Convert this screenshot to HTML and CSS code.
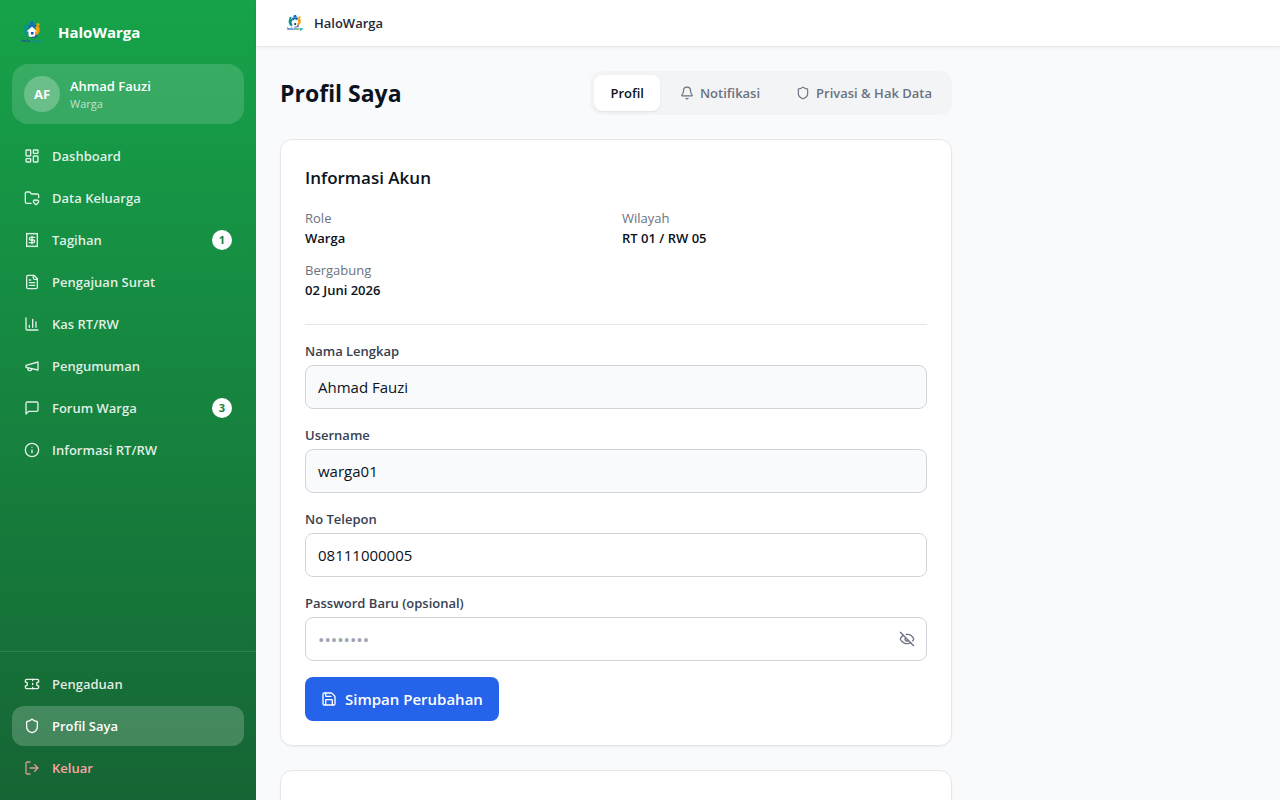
FILE: index.html
```html
<!DOCTYPE html>
<html lang="id">
<head>
<meta charset="utf-8">
<meta name="viewport" content="width=device-width, initial-scale=1">
<title>Profil Saya - HaloWarga</title>
<link rel="stylesheet" href="styles.css">
</head>
<body>
<svg class="defs" aria-hidden="true">
  <symbol id="logo" viewBox="0 0 48 48">
    <path d="M11 10a15 15 0 0 0 3 23l5-5a9 9 0 0 1-1-12z" fill="#0d9488"/>
    <path d="M15 12q7-5 7-2h4q5-3 7 2l-6 5H19z" fill="#1769b5"/>
    <path d="M35 10q6 5 4 13-3 8-12 10l-1-6q8-2 5-12z" fill="#f59e0b"/>
    <circle cx="24" cy="6" r="4" fill="#1769d2"/>
    <circle cx="36" cy="9" r="3" fill="#f59e0b"/>
    <circle cx="12" cy="10" r="3" fill="#0d9488"/>
    <path d="M24 13l-11 10h4v8l3 3h10v-11h4z" fill="#fff"/>
    <path d="M22 24h5v5h-5zM22 34q8 0 11-5l2 3q-5 5-13 4z" fill="#1e4e9c"/>
    <text x="24" y="43" text-anchor="middle" class="logo-text"><tspan fill="#1e4e9c">halo</tspan><tspan fill="#0d9488">warga</tspan></text>
  </symbol>
  <symbol id="shield" viewBox="0 0 24 24"><path d="M20 13c0 5-3.5 7.5-7.66 8.95a1 1 0 0 1-.67-.01C7.5 20.5 4 18 4 13V6a1 1 0 0 1 1-1c2 0 4.5-1.2 6.24-2.72a1.17 1.17 0 0 1 1.52 0C14.51 3.81 17 5 19 5a1 1 0 0 1 1 1z"/></symbol>
</svg>
<div class="app">
  <aside class="sidebar">
    <div class="brand"><svg class="brand-logo"><use href="#logo"/></svg><span>HaloWarga</span></div>
    <div class="user">
      <span class="avatar">AF</span>
      <div class="user-info"><span class="user-name">Ahmad Fauzi</span><span class="user-role">Warga</span></div>
    </div>
    <nav class="nav nav-main">
      <a href="#" class="nav-item"><svg class="icon" viewBox="0 0 24 24"><rect width="7" height="9" x="3" y="3" rx="1"/><rect width="7" height="5" x="14" y="3" rx="1"/><rect width="7" height="9" x="14" y="12" rx="1"/><rect width="7" height="5" x="3" y="16" rx="1"/></svg><span>Dashboard</span></a>
      <a href="#" class="nav-item"><svg class="icon" viewBox="0 0 24 24"><path d="M10.638 20H4a2 2 0 0 1-2-2V5a2 2 0 0 1 2-2h3.9a2 2 0 0 1 1.69.9l.81 1.2a2 2 0 0 0 1.67.9H20a2 2 0 0 1 2 2v3.417"/><path d="M14.62 18.8A2.25 2.25 0 1 1 18 15.836a2.25 2.25 0 1 1 3.38 2.966l-2.626 2.856a1 1 0 0 1-1.507 0z"/></svg><span>Data Keluarga</span></a>
      <a href="#" class="nav-item"><svg class="icon" viewBox="0 0 24 24"><path d="M4 2v20l2-1 2 1 2-1 2 1 2-1 2 1 2-1 2 1V2l-2 1-2-1-2 1-2-1-2 1-2-1-2 1Z"/><path d="M16 8h-6a2 2 0 1 0 0 4h4a2 2 0 1 1 0 4H8"/><path d="M12 17.5v-11"/></svg><span>Tagihan</span><span class="badge">1</span></a>
      <a href="#" class="nav-item"><svg class="icon" viewBox="0 0 24 24"><path d="M15 2H6a2 2 0 0 0-2 2v16a2 2 0 0 0 2 2h12a2 2 0 0 0 2-2V7Z"/><path d="M14 2v4a2 2 0 0 0 2 2h4"/><path d="M10 9H8M16 13H8M16 17H8"/></svg><span>Pengajuan Surat</span></a>
      <a href="#" class="nav-item"><svg class="icon" viewBox="0 0 24 24"><path d="M3 3v16a2 2 0 0 0 2 2h16"/><path d="M18 17V9M13 17V5M8 17v-3"/></svg><span>Kas RT/RW</span></a>
      <a href="#" class="nav-item"><svg class="icon" viewBox="0 0 24 24"><path d="m3 11 18-5v12L3 14v-3z"/><path d="M11.6 16.8a3 3 0 1 1-5.8-1.6"/></svg><span>Pengumuman</span></a>
      <a href="#" class="nav-item"><svg class="icon" viewBox="0 0 24 24"><path d="M21 15a2 2 0 0 1-2 2H7l-4 4V5a2 2 0 0 1 2-2h14a2 2 0 0 1 2 2z"/></svg><span>Forum Warga</span><span class="badge">3</span></a>
      <a href="#" class="nav-item"><svg class="icon" viewBox="0 0 24 24"><circle cx="12" cy="12" r="10"/><path d="M12 16v-4M12 8h.01"/></svg><span>Informasi RT/RW</span></a>
    </nav>
    <nav class="nav nav-foot">
      <a href="#" class="nav-item"><svg class="icon" viewBox="0 0 24 24"><path d="M2 9a3 3 0 0 1 0 6v2a2 2 0 0 0 2 2h16a2 2 0 0 0 2-2v-2a3 3 0 0 1 0-6V7a2 2 0 0 0-2-2H4a2 2 0 0 0-2 2Z"/><path d="M13 5v2M13 17v2M13 11v2"/></svg><span>Pengaduan</span></a>
      <a href="#" class="nav-item active" aria-current="page"><svg class="icon"><use href="#shield"/></svg><span>Profil Saya</span></a>
      <button type="button" class="nav-item logout"><svg class="icon" viewBox="0 0 24 24"><path d="m16 17 5-5-5-5M21 12H9M9 21H5a2 2 0 0 1-2-2V5a2 2 0 0 1 2-2h4"/></svg><span>Keluar</span></button>
    </nav>
  </aside>
  <div class="page">
    <header class="topbar"><svg class="topbar-logo"><use href="#logo"/></svg><span>HaloWarga</span></header>
    <main class="main">
      <div class="content">
        <div class="head">
          <h1>Profil Saya</h1>
          <div class="tabs" role="tablist">
            <button type="button" role="tab" aria-selected="true" class="tab selected">Profil</button>
            <button type="button" role="tab" aria-selected="false" class="tab"><svg class="icon small" viewBox="0 0 24 24"><path d="M10.268 21a2 2 0 0 0 3.464 0"/><path d="M3.262 15.326A1 1 0 0 0 4 17h16a1 1 0 0 0 .74-1.673C19.41 13.956 18 12.499 18 8A6 6 0 0 0 6 8c0 4.499-1.411 5.956-2.738 7.326"/></svg>Notifikasi</button>
            <button type="button" role="tab" aria-selected="false" class="tab"><svg class="icon small"><use href="#shield"/></svg>Privasi &amp; Hak Data</button>
          </div>
        </div>
        <section class="card">
          <h2>Informasi Akun</h2>
          <dl class="facts">
            <div><dt>Role</dt><dd>Warga</dd></div>
            <div><dt>Wilayah</dt><dd>RT 01 / RW 05</dd></div>
            <div><dt>Bergabung</dt><dd>02 Juni 2026</dd></div>
          </dl>
          <form class="form">
            <div class="field"><label for="nama">Nama Lengkap</label><input id="nama" type="text" value="Ahmad Fauzi" readonly></div>
            <div class="field"><label for="username">Username</label><input id="username" type="text" value="warga01" readonly></div>
            <div class="field"><label for="telepon">No Telepon</label><input id="telepon" type="tel" value="08111000005"></div>
            <div class="field"><label for="password">Password Baru (opsional)</label>
              <div class="password"><input id="password" type="password" placeholder="••••••••">
                <button type="button" class="reveal" aria-label="Tampilkan password"><svg class="icon" viewBox="0 0 24 24"><path d="M10.733 5.076a10.744 10.744 0 0 1 11.205 6.575 1 1 0 0 1 0 .696 10.747 10.747 0 0 1-1.444 2.49"/><path d="M14.084 14.158a3 3 0 0 1-4.242-4.242"/><path d="M17.479 17.499a10.75 10.75 0 0 1-15.417-5.151 1 1 0 0 1 0-.696 10.75 10.75 0 0 1 4.446-5.143"/><path d="m2 2 20 20"/></svg></button>
              </div>
            </div>
            <button type="submit" class="save"><svg class="icon" viewBox="0 0 24 24"><path d="M15.2 3a2 2 0 0 1 1.4.6l3.8 3.8a2 2 0 0 1 .6 1.4V19a2 2 0 0 1-2 2H5a2 2 0 0 1-2-2V5a2 2 0 0 1 2-2z"/><path d="M17 21v-7a1 1 0 0 0-1-1H8a1 1 0 0 0-1 1v7M7 3v4a1 1 0 0 0 1 1h7"/></svg>Simpan Perubahan</button>
          </form>
        </section>
        <section class="card card-next"></section>
      </div>
    </main>
  </div>
</div>
</body>
</html>
```
FILE: styles.css
```css
* { box-sizing: border-box; }
body {
  margin: 0;
  background: #f9fafb;
  color: #0b1220;
  font-family: "Segoe UI", "Open Sans", "Noto Sans", sans-serif;
  font-size: 13px;
  line-height: 20px;
}
button, input { font: inherit; color: inherit; }
button { border: 0; background: none; cursor: pointer; }
a { color: inherit; text-decoration: none; }
h1, h2, dl, dd { margin: 0; }
.defs { position: absolute; width: 0; height: 0; }
.logo-text { font-size: 8px; font-weight: 700; }
.icon {
  width: 16px;
  height: 16px;
  flex: none;
  fill: none;
  stroke: currentColor;
  stroke-width: 2;
  stroke-linecap: round;
  stroke-linejoin: round;
}
.icon.small { width: 14px; height: 14px; }

.app { display: flex; height: 100vh; overflow: hidden; }
.sidebar {
  width: 256px;
  flex: none;
  display: flex;
  flex-direction: column;
  background: linear-gradient(to bottom, #16a34a, #166534);
  color: #fff;
}
.brand {
  display: flex;
  align-items: center;
  gap: 14px;
  height: 64px;
  padding: 0 20px;
  font-size: 15px;
  font-weight: 700;
}
.brand-logo { width: 24px; height: 24px; }
.user {
  display: flex;
  align-items: center;
  gap: 10px;
  margin: 0 12px;
  padding: 12px;
  border-radius: 16px;
  background: rgba(255, 255, 255, 0.15);
}
.avatar {
  display: grid;
  place-items: center;
  width: 36px;
  height: 36px;
  border-radius: 50%;
  background: rgba(255, 255, 255, 0.25);
  font-weight: 700;
}
.user-info { display: flex; flex-direction: column; }
.user-name { font-weight: 600; }
.user-role { font-size: 11px; line-height: 16px; color: rgba(255, 255, 255, 0.7); }
.nav { display: flex; flex-direction: column; gap: 2px; padding: 12px; }
.nav-main { flex: 1; }
.nav-foot { padding-top: 12px; border-top: 1px solid rgba(255, 255, 255, 0.1); }
.nav-item {
  display: flex;
  align-items: center;
  gap: 12px;
  padding: 10px 12px;
  border-radius: 12px;
  font-weight: 600;
  color: rgba(255, 255, 255, 0.88);
}
.nav-item.active { background: rgba(255, 255, 255, 0.2); color: #fff; }
.nav-item.logout { color: #fca5a5; }
.logout .icon { opacity: 0.85; }
.badge {
  display: grid;
  place-items: center;
  width: 20px;
  height: 20px;
  margin-left: auto;
  border-radius: 50%;
  background: #fff;
  color: #15803d;
  font-size: 11px;
  font-weight: 700;
}

.page { flex: 1; min-width: 0; display: flex; flex-direction: column; }
.topbar {
  display: flex;
  align-items: center;
  gap: 10px;
  padding: 13px 30px;
  background: #fff;
  box-shadow: 0 1px 3px rgba(0, 0, 0, 0.1);
  font-weight: 600;
  color: #1f2937;
}
.topbar-logo { width: 18px; height: 18px; }
.main { flex: 1; min-height: 0; padding: 25px 24px 0; overflow: hidden; }
.content { display: flex; flex-direction: column; gap: 24px; max-width: 672px; }
.head { display: flex; align-items: center; justify-content: space-between; }
h1 { font-size: 23px; line-height: 32px; font-weight: 700; }
.tabs { display: flex; gap: 4px; padding: 4px; border-radius: 12px; background: #f3f4f6; }
.tab {
  display: flex;
  align-items: center;
  gap: 6px;
  padding: 8px 16px;
  border-radius: 8px;
  font-weight: 600;
  color: #6b7280;
}
.tab.selected { background: #fff; color: #0b1220; box-shadow: 0 1px 2px rgba(0, 0, 0, 0.08); }
.card {
  padding: 24px;
  border: 1px solid #e5e7eb;
  border-radius: 12px;
  background: #fff;
  box-shadow: 0 1px 2px rgba(0, 0, 0, 0.05);
}
.card-next { min-height: 240px; }
h2 { margin-bottom: 16px; font-size: 17px; line-height: 28px; font-weight: 600; }
.facts {
  display: grid;
  grid-template-columns: 1fr 1fr;
  gap: 12px;
  padding-bottom: 24px;
  border-bottom: 1px solid #e5e7eb;
}
dt { color: #6b7280; }
dd { font-weight: 600; }
.form { display: flex; flex-direction: column; gap: 16px; padding-top: 16px; }
.field { display: flex; flex-direction: column; gap: 4px; }
label { font-weight: 600; color: #374151; }
input {
  width: 100%;
  height: 44px;
  padding: 0 12px;
  border: 1px solid #d1d5db;
  border-radius: 8px;
  background: #fff;
  font-size: 15px;
}
input:read-only { background: #f9fafb; }
input::placeholder { color: #9ca3af; }
.password { position: relative; }
.password input { padding-right: 40px; font-size: 17px; }
.reveal {
  position: absolute;
  top: 0;
  right: 0;
  display: grid;
  place-items: center;
  width: 40px;
  height: 44px;
  padding: 0;
  color: #6b7280;
}
.save {
  display: flex;
  align-items: center;
  align-self: flex-start;
  gap: 8px;
  height: 44px;
  padding: 0 16px;
  border-radius: 8px;
  background: #2563eb;
  color: #fff;
  font-size: 15px;
  font-weight: 600;
}
```
